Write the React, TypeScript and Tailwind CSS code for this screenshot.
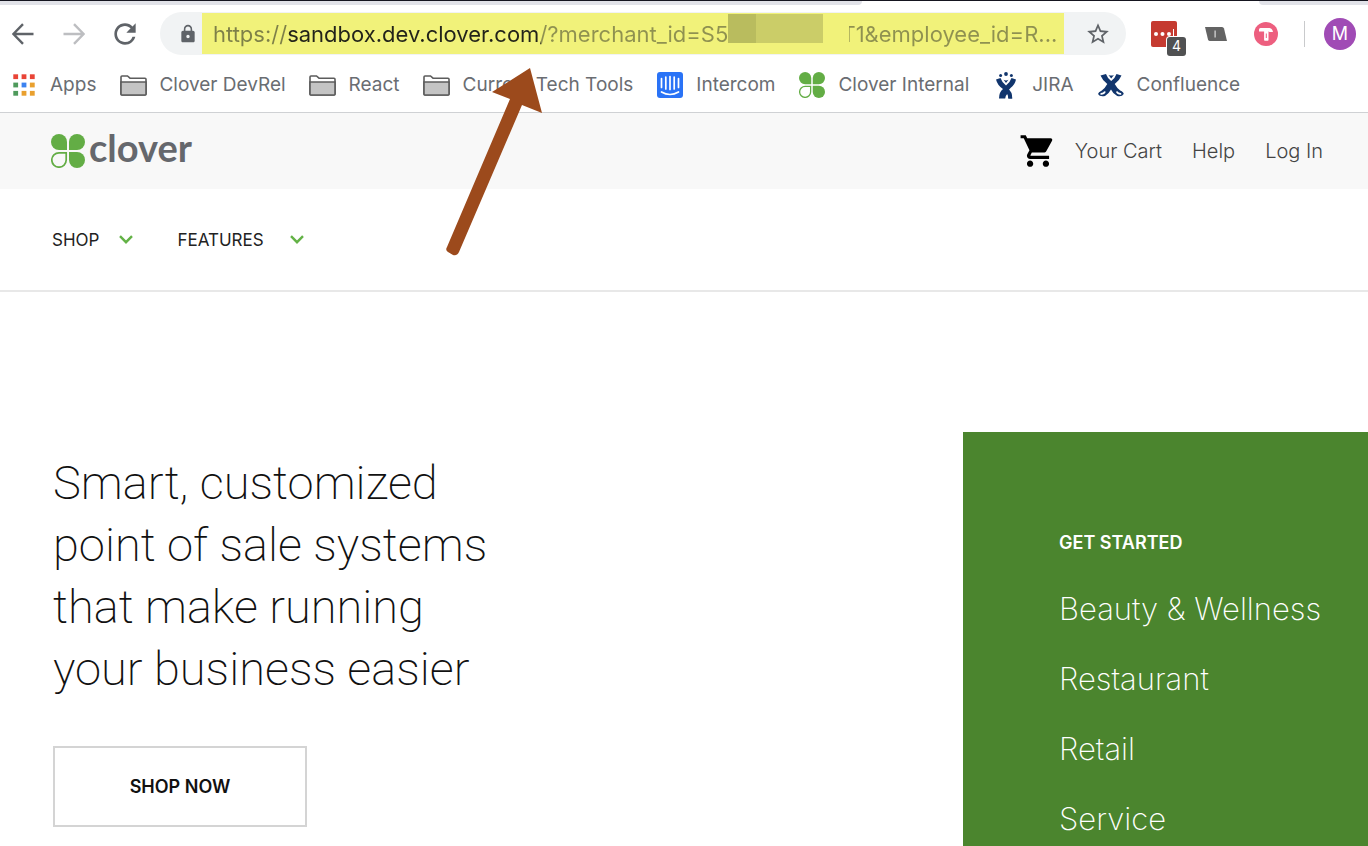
import { MdLock, MdRefresh, MdShoppingCart, MdStarBorder } from "react-icons/md";
import type { ReactNode } from "react";

function ArrowIcon({ className }: { className: string }) {
  return (
    <svg className={className} viewBox="0 0 22 22" fill="none" stroke="currentColor" strokeWidth="2.4">
      <path d="M21.5 11H2M11 1.2 1.4 11l9.6 9.8" />
    </svg>
  );
}

function CloverMark({ className }: { className: string }) {
  return (
    <svg className={className} viewBox="0 0 34 34" fill="#63ad45">
      <path d="M16 16H8A8 8 0 1 1 16 8Z" />
      <path d="M18 16V8a8 8 0 1 1 8 8Z" />
      <path d="M18 18h8a8 8 0 1 1-8 8Z" />
      <path d="M15.2 18.8V26a7.2 7.2 0 1 1-7.2-7.2Z" fill="none" stroke="#63ad45" strokeWidth="1.7" />
    </svg>
  );
}

function FolderIcon() {
  return (
    <svg className="h-[21px] w-[27px]" viewBox="0 0 27 21" stroke="#5c5c5c" strokeWidth="1.6">
      <path d="M1 19V2q0-1 1-1h5.500l2.500 2.200h15q1 0 1 1V19q0 1-1 1H2q-1 0-1-1Z" fill="#fff" />
      <path d="M1 7h25v12q0 1-1 1H2q-1 0-1-1Z" fill="#c4c4c4" />
    </svg>
  );
}

const dotColors = ["#e94436", "#e94436", "#e94436", "#4f9a5c", "#3b82f0", "#e9a02f", "#4f9a5c", "#e9a02f", "#e9a02f"];

function AppsIcon() {
  return (
    <svg className="size-[22px]" viewBox="0 0 22 22">
      {dotColors.map((color, i) => (
        <rect key={i} x={(i % 3) * 8.3 + 0.3} y={Math.floor(i / 3) * 8.3 + 0.3} width="4.800" height="4.800" fill={color} />
      ))}
    </svg>
  );
}

function IntercomIcon() {
  return (
    <svg className="size-[26px]" viewBox="0 0 26 26" fill="none" stroke="#fff" strokeWidth="1.7" strokeLinecap="round">
      <rect width="26" height="26" rx="3" fill="#2a73f6" stroke="none" />
      <path d="M4.5 6.5v9M8.800 5v12M13 4.5v13M17.2 5v12M21.5 6.5v9M4.5 20q8.5 5 17 0" />
    </svg>
  );
}

function JiraIcon() {
  return (
    <svg className="h-[27px] w-5" viewBox="0 0 20 27" fill="#11356d">
      <circle cx="4.600" cy="3.600" r="1.500" />
      <circle cx="10" cy="2" r="1.900" />
      <circle cx="15.400" cy="3.600" r="1.500" />
      <path d="M0 7.500 4.500 6q1.500 4.500 5.500 7.500 4-3 5.500-7.500L20 7.500q-1.200 5.500-5.500 8.500-2.500 2.200-2.300 4.200 4 1.800 4 6.300h-4q.2-2.500-1-4.500-1.800 1.500-2 4.500H3q0-6.500 4-9.500Q1.500 13.500 0 7.500Z" />
      <path d="M11.500 16.500q5 3 4.700 10h-3.700q.5-5-3.500-7.500Z" />
      <path d="M7.600 7.800q2.400 1.200 4.800 0L10 11Z" />
    </svg>
  );
}

function ConfluenceIcon() {
  return (
    <svg className="h-[23px] w-[26px]" viewBox="0 0 26 23" fill="#11356d">
      <path d="M2.500 1.500 8 0q1.500 4.500 5.200 7Q17 4.500 18.500 0L23.500 1.500q-2 5-6.800 8.500 2.500 4.500 5.500 6.500 3.500 1.500 3.500 3.500-1.700 3-6.500 2-4.500-2.500-6.200-6.500Q11 19.500 7 22q-5.500 1-7-2 .2-2 3.800-3.500 3-2 5.500-6.500-4.800-3.500-6.800-8.500Z" />
      <path d="M10.500 1q2.700 1.200 5.400 0l-2.700 3.500Z" />
      <path d="M2.500 19.800q3.500.2 4.500-2.300M23.200 19.800q-3.500.2-4.500-2.300" stroke="#fff" strokeWidth="1.800" fill="none" />
    </svg>
  );
}

const bookmarks: { label: string; icon: ReactNode }[] = [
  { label: "Apps", icon: <AppsIcon /> },
  { label: "Clover DevRel", icon: <FolderIcon /> },
  { label: "React", icon: <FolderIcon /> },
  { label: "Current Tech Tools", icon: <FolderIcon /> },
  { label: "Intercom", icon: <IntercomIcon /> },
  { label: "Clover Internal", icon: <CloverMark className="size-[26px]" /> },
  { label: "JIRA", icon: <JiraIcon /> },
  { label: "Confluence", icon: <ConfluenceIcon /> },
];

function BrowserChrome() {
  return (
    <div className="relative border-b border-[#cfd1d4] bg-white text-[#6a6d72]">
      <div className="flex h-[5px] justify-between border-t border-[#15151f]">
        <div className="w-[63%] rounded-br-lg bg-[#e1e2e8]" />
        <div className="w-[8%] rounded-bl-lg bg-[#e1e2e8]" />
      </div>

      <div className="flex h-[57px] items-center pr-3 pl-3">
        <button aria-label="Back" className="text-[#5f6368]"><ArrowIcon className="size-[22px]" /></button>
        <button aria-label="Forward" className="ml-[29px] text-[#bdbec1]"><ArrowIcon className="size-[22px] rotate-180" /></button>
        <button aria-label="Reload" className="ml-6 text-[#5f6368]"><MdRefresh size={32} /></button>
        <div className="ml-[19px] flex h-[43px] flex-1 items-center rounded-full bg-[#f1f3f4] pl-[18px]">
          <MdLock size={20} className="text-[#5f6368]" />
          <div className="relative ml-1 flex h-[41px] flex-1 items-center bg-[#f1f27a] pl-[11px]">
            <input
              aria-label="Address"
              defaultValue={"https://sandbox.dev.clover.com/?merchant_id=S5S" + "\u00a0".repeat(16) + "T1&employee_id=R..."}
              className="w-full bg-[linear-gradient(to_right,#7e8048_75px,#22231a_75px,#22231a_328px,#8f9150_328px)] bg-clip-text text-[22px] leading-7 text-transparent outline-none"
            />
            <div className="absolute top-px left-[526px] flex h-[29px] w-[121px]">
              <div className="w-7 bg-[#b9bc5e]" />
              <div className="w-[67px] bg-[#cbcd68]" />
              <div className="flex-1 bg-[#f1f27a]" />
            </div>
          </div>
          <button aria-label="Bookmark this page" className="mr-[15px] ml-[21px] text-[#5f6368]"><MdStarBorder size={26} /></button>
        </div>
        <button aria-label="Password manager, 4 items" className="relative ml-[25px]">
          <svg className="size-[26px]" viewBox="0 0 26 26" fill="#fff">
            <rect width="26" height="26" rx="2" fill="#c53a30" />
            <circle cx="5" cy="13" r="2" /><circle cx="11.500" cy="13" r="2" /><circle cx="18" cy="13" r="2" />
            <path d="M22 8h1v9h-1z" />
          </svg>
          <span className="absolute top-4 left-4 flex size-[19px] items-center justify-center rounded-[3px] bg-[#505152] text-sm leading-none text-white ring-1 ring-white">4</span>
        </button>
        <button aria-label="Input tools" className="ml-[27px]">
          <svg className="h-[14px] w-[23px]" viewBox="0 0 23 14">
            <path d="M1 0h17q1.500 0 2 1.500L23 14H6q-1.500 0-2-1.500Z" fill="#636363" />
            <path d="M10.500 3.500h1.200v7h-1.200z" fill="#ddd" />
          </svg>
        </button>
        <button aria-label="Toby" className="ml-[27px]">
          <svg className="size-6" viewBox="0 0 24 24">
            <circle cx="12" cy="12" r="12" fill="#ed5f7f" />
            <path d="M5 9.500V7.500q0-1.500 1.500-1.500h9q2.500 0 3.500 4h-3.500l-1-.8V18q0 .7-.7.7h-3q-.7 0-.7-.7V9.500Z" fill="#fff" />
            <path d="M11.800 11.500h1v4.500h-1z" fill="#ed5f7f" />
          </svg>
        </button>
        <div className="ml-[26px] h-[26px] w-px bg-[#c9cacc]" />
        <button aria-label="Profile" className="ml-[19px] flex size-8 items-center justify-center rounded-full bg-[#a04bb5] text-lg text-white">M</button>
      </div>

      <nav aria-label="Bookmarks" className="flex h-[50px] items-center gap-[23px] pb-1 pl-[10px] text-[19px] leading-6">
        {bookmarks.map(({ label, icon }) => (
          <a key={label} href="#" className="flex shrink-0 items-center gap-3 whitespace-nowrap">
            <span className="flex w-7 justify-center">{icon}</span>
            {label}
          </a>
        ))}
      </nav>

      <svg className="pointer-events-none absolute top-[67px] left-[445px] h-[190px] w-[98px]" viewBox="0 0 98 190" fill="#9c4a1c">
        <path d="m85 1 12 45-20-8-63 147q-2 4-6 3l-5-3q-3-2-1-5L65 32l-18-7Z" />
      </svg>
    </div>
  );
}

function Chevron() {
  return (
    <svg className="h-[9px] w-[14px]" viewBox="0 0 14 9" fill="none" stroke="#63b246" strokeWidth="2.4">
      <path d="m1 1.200 6 6 6-6" />
    </svg>
  );
}

const industries = ["Beauty & Wellness", "Restaurant", "Retail", "Service"];

export default function App() {
  return (
    <div className="flex min-h-screen flex-col bg-white font-['Inter','Liberation_Sans',sans-serif]">
      <BrowserChrome />

      <header className="flex h-[76px] items-center justify-between bg-[#f8f8f8] pr-[45px] pl-[51px]">
        <a href="#" className="flex items-center gap-1">
          <CloverMark className="size-[34px]" />
          <span className="pb-2 font-['Lato',sans-serif] text-[38px] leading-10 font-bold text-[#65676c]">clover</span>
        </a>
        <nav aria-label="Account" className="flex items-center gap-[30px] text-xl leading-6 font-light text-[#444]">
          <a href="#" className="flex items-center gap-[18px]">
            <MdShoppingCart size={38} className="text-black" />
            Your Cart
          </a>
          <a href="#">Help</a>
          <a href="#">Log In</a>
        </nav>
      </header>

      <nav aria-label="Main" className="flex h-[103px] items-center gap-11 border-b-2 border-[#e8e8e8] pl-[52px] text-[17px] leading-6 text-[#222]">
        <button className="flex items-center gap-5">SHOP <Chevron /></button>
        <button className="flex items-center gap-[26px]">FEATURES <Chevron /></button>
      </nav>

      <main className="flex flex-1 justify-between pt-[140px]">
        <section className="pt-5 pb-5 pl-[53px]">
          <h1 className="font-['Roboto','Inter',sans-serif] text-[47px] leading-[62px] font-extralight text-[#111]">
            Smart, customized
            <br />
            point of sale systems
            <br />
            that make running
            <br />
            your business easier
          </h1>
          <button className="mt-[46px] h-[81px] w-[254px] border-2 border-[#d4d4d4] pt-px text-lg font-semibold text-[#111]">SHOP NOW</button>
        </section>
        <aside className="w-[405px] bg-[#4b852e] pt-[99px] pb-2 pl-24 text-white">
          <h2 className="text-lg leading-6 font-semibold">GET STARTED</h2>
          <ul className="mt-[35px] flex flex-col gap-8 text-[31px] leading-[38px] font-extralight whitespace-nowrap">
            {industries.map((name) => (
              <li key={name}><a href="#">{name}</a></li>
            ))}
          </ul>
        </aside>
      </main>
    </div>
  );
}
